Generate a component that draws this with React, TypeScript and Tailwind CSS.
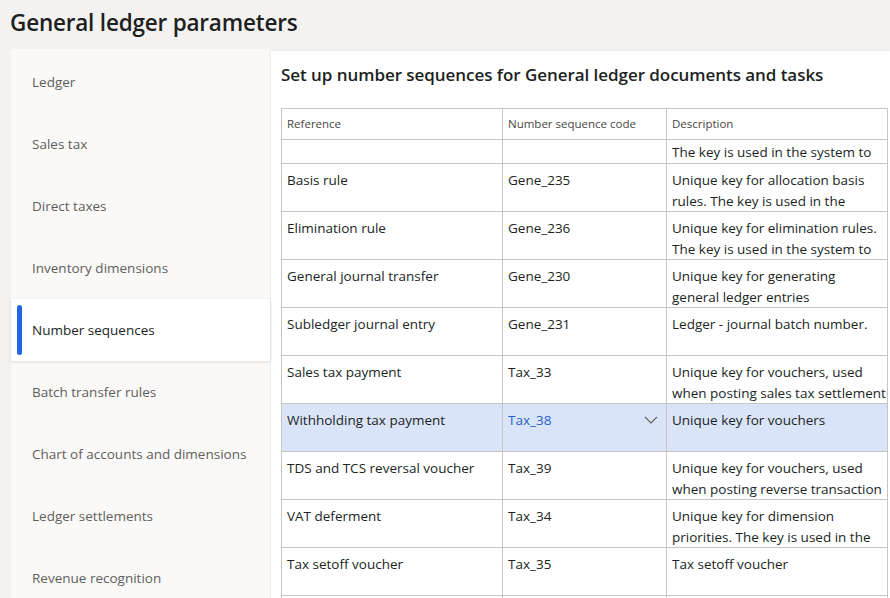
import React from "react";

const navItems = [
  "Ledger",
  "Sales tax",
  "Direct taxes",
  "Inventory dimensions",
  "Number sequences",
  "Batch transfer rules",
  "Chart of accounts and dimensions",
  "Ledger settlements",
  "Revenue recognition",
];

type Row = { ref: string; code: string; desc: string[]; selected?: boolean };

const rows: Row[] = [
  { ref: "Basis rule", code: "Gene_235", desc: ["Unique key for allocation basis", "rules. The key is used in the"] },
  { ref: "Elimination rule", code: "Gene_236", desc: ["Unique key for elimination rules.", "The key is used in the system to"] },
  { ref: "General journal transfer", code: "Gene_230", desc: ["Unique key for generating", "general ledger entries"] },
  { ref: "Subledger journal entry", code: "Gene_231", desc: ["Ledger - journal batch number."] },
  { ref: "Sales tax payment", code: "Tax_33", desc: ["Unique key for vouchers, used", "when posting sales tax settlement"] },
  { ref: "Withholding tax payment", code: "Tax_38", desc: ["Unique key for vouchers"], selected: true },
  { ref: "TDS and TCS reversal voucher", code: "Tax_39", desc: ["Unique key for vouchers, used", "when posting reverse transaction"] },
  { ref: "VAT deferment", code: "Tax_34", desc: ["Unique key for dimension", "priorities. The key is used in the"] },
  { ref: "Tax setoff voucher", code: "Tax_35", desc: ["Tax setoff voucher"] },
  { ref: "", code: "", desc: [""] },
];

const font = { fontFamily: '"Segoe UI", "Open Sans", "Noto Sans", sans-serif' };

export default function App() {
  return (
    <div className="w-[890px] h-[598px] overflow-hidden bg-[#f3f2f1] text-[#201f1e]" style={font}>
      <div className="h-[49px] pl-[10px] flex items-center">
        <h1 className="text-[22.5px] font-semibold leading-none tracking-[-0.2px] text-[#201f1e] -mt-[2px]">
          General ledger parameters
        </h1>
      </div>
      <div className="flex h-[549px] pl-[11px]">
        <nav className="w-[259px] bg-[#faf9f8] flex flex-col pt-[2px] shrink-0">
          {navItems.map((item) => {
            const sel = item === "Number sequences";
            return (
              <div
                key={item}
                className={
                  "h-[62px] shrink-0 flex items-center relative pl-[21px] text-[13.5px] " +
                  (sel
                    ? "bg-white text-[#201f1e] shadow-[0_1px_3px_rgba(0,0,0,0.12)] z-10"
                    : "text-[#605e5c]")
                }
              >
                {sel && (
                  <span className="absolute left-[6px] top-[6px] bottom-[6px] w-[5px] rounded-full bg-[#2266e3]" />
                )}
                {item}
              </div>
            );
          })}
        </nav>
        <main className="flex-1 bg-white mt-[2px] ml-[1px] pl-[10px] shadow-[0_0_3px_rgba(0,0,0,0.08)]">
          <h2 className="pt-[12px] pb-[21px] leading-[24px] text-[17px] font-semibold text-[#201f1e] tracking-[-0.05px]">
            Set up number sequences for General ledger documents and tasks
          </h2>
          <div className="w-[607px] border-l border-t border-r border-[#c8c6c4] text-[13.5px]">
            <div className="flex h-[31px] border-b border-[#c8c6c4] text-[11.5px] text-[#484644]">
              <div className="w-[221px] border-r border-[#c8c6c4] px-[5px] flex items-center">Reference</div>
              <div className="w-[164px] border-r border-[#c8c6c4] px-[5px] flex items-center">Number sequence code</div>
              <div className="flex-1 px-[5px] flex items-center">Description</div>
            </div>
            <div className="flex h-[24px] border-b border-[#c8c6c4] overflow-hidden">
              <div className="w-[221px] border-r border-[#c8c6c4]" />
              <div className="w-[164px] border-r border-[#c8c6c4]" />
              <div className="flex-1 px-[5px] flex items-end leading-[21px] overflow-hidden whitespace-nowrap">
                The key is used in the system to
              </div>
            </div>
            {rows.map((r, i) => (
              <div
                key={i}
                className={
                  "flex h-[48px] border-b border-[#c8c6c4] overflow-hidden leading-[21px] " +
                  (r.selected ? "bg-[#dae4f9]" : "")
                }
              >
                <div className="w-[221px] border-r border-[#c8c6c4] px-[5px] pt-[6px] whitespace-nowrap overflow-hidden">
                  {r.ref}
                </div>
                <div
                  className={
                    "w-[164px] border-r border-[#c8c6c4] px-[5px] pt-[6px] flex justify-between items-start " +
                    (r.selected ? "text-[#2561c4]" : "")
                  }
                >
                  <span>{r.code}</span>
                  {r.selected && (
                    <svg width="14" height="8" viewBox="0 0 14 8" className="mt-[6px] mr-[3px]">
                      <path d="M1 1 L7 7 L13 1" fill="none" stroke="#605e5c" strokeWidth="1.1" />
                    </svg>
                  )}
                </div>
                <div className="flex-1 px-[5px] pt-[6px] whitespace-nowrap overflow-hidden">
                  {r.desc.map((d, j) => (
                    <div key={j}>{d}</div>
                  ))}
                </div>
              </div>
            ))}
          </div>
        </main>
      </div>
    </div>
  );
}
